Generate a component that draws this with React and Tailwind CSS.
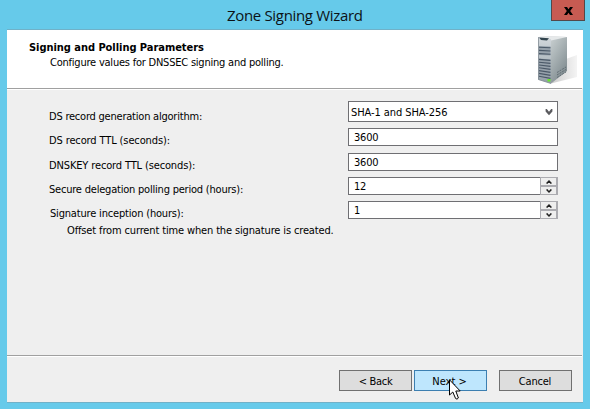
const TEXT = "font-['DejaVu_Sans_Condensed','DejaVu_Sans',sans-serif] text-[11px] leading-[13px] whitespace-nowrap text-black";

function Server() {
  return (
    <svg width="42" height="50" viewBox="3 0 42 50" className="block">
      <defs>
        <linearGradient id="side" x1="0" y1="0" x2="1" y2="1">
          <stop offset="0" stopColor="#e3e6e7" />
          <stop offset="0.45" stopColor="#b0b9bb" />
          <stop offset="1" stopColor="#727e83" />
        </linearGradient>
        <linearGradient id="front" x1="0" y1="0" x2="0" y2="1">
          <stop offset="0" stopColor="#d3d9dd" />
          <stop offset="1" stopColor="#929ea6" />
        </linearGradient>
        <linearGradient id="shade" x1="0" y1="0" x2="1" y2="0">
          <stop offset="0" stopColor="#cccccc" />
          <stop offset="1" stopColor="#f4f4f4" />
        </linearGradient>
      </defs>
      <path d="M31 23 L42 19 V41 L16 47.5 Z" fill="url(#shade)" />
      <path d="M3 1 L13 0.3 L32 1 V35 L16 47.5 L15 5 Z" fill="url(#side)" />
      <path d="M3 1 L13 0.3 L32 1 L16 4.5 Z" fill="#e6e9ea" />
      <path d="M3 1 L16 3 V47.5 L3 43.5 Z" fill="url(#front)" />
      <path d="M4 1.6 L14 2.2 L12 4.4 L6 4 Z" fill="#33454f" />
      <path d="M4 10 L15.5 10.5 V19.5 L4 19 Z M4 22.5 L15.5 23.5 V43.5 L4 40.5 Z" fill="#96a1ab" />
      <path
        d="M4 11.2 L15.5 11.8 M4 14.4 L15.5 15 M4 17.6 L15.5 18.2 M4 23.4 L15.5 24.4 M4 26.2 L15.5 27.4 M4 29 L15.5 30.4 M4 31.8 L15.5 33.4 M4 34.6 L15.5 36.4 M4 37.4 L15.5 39.4 M4 40.2 L15.5 42.4"
        stroke="#4b5968"
        strokeWidth="1.1"
      />
      <path d="M3.4 1 V43.5 L16 47.5" fill="none" stroke="#7d8890" strokeWidth="0.8" />
      <path d="M22 36.5 L31 31 M22 39 L31 33.5 M22 41.5 L31 36" stroke="#5b686e" strokeWidth="0.9" strokeDasharray="2 1" />
      <rect x="12.5" y="43" width="3" height="2.5" fill="#67e82a" />
    </svg>
  );
}

function Chevron({ up }) {
  return (
    <svg width="6" height="4" viewBox="0 0 6 4" className="block">
      <path d={up ? 'M0.6 3.6 L3 1.1 L5.4 3.6' : 'M0.6 0.4 L3 2.9 L5.4 0.4'} fill="none" stroke="#222" strokeWidth="1.5" />
    </svg>
  );
}

function Label({ children, className }) {
  return <div className={`${TEXT} w-[299px] shrink-0 ${className}`}>{children}</div>;
}

function Input({ children }) {
  return (
    <div className="h-[18px] w-[210px] border border-[#6f6f73] bg-white pt-[2px] pl-[5px]">
      <div className={`${TEXT} tracking-[-0.2px]`}>{children}</div>
    </div>
  );
}

function Spinner({ children }) {
  return (
    <div className="flex h-[18px] w-[210px]">
      <div className="h-[18px] w-[192px] border border-r-0 border-[#6f6f73] bg-white pt-[2px] pl-[5px]">
        <div className={`${TEXT} tracking-[-0.3px]`}>{children}</div>
      </div>
      <div className="flex h-[18px] w-[18px] flex-col gap-[2px] border border-r-2 border-[#ababb0] bg-[#ababb0]">
        <div className="flex h-[7px] items-center justify-center bg-[#eeeeee]"><Chevron up /></div>
        <div className="flex h-[7px] items-center justify-center bg-[#eeeeee]"><Chevron /></div>
      </div>
    </div>
  );
}

function Button({ children, className }) {
  return <div className={`${TEXT} h-[21px] w-[73px] border pt-[4px] text-center ${className}`}>{children}</div>;
}

export default function App() {
  return (
    <div className="relative h-[409px] w-[590px] overflow-hidden bg-[#66caea]">
      <div className="flex h-[29px] items-start">
        <div className="w-[551px] pt-[5px] pl-[227px] font-['Open_Sans','Noto_Sans',sans-serif] text-[15px] leading-[20px] tracking-[-0.33px] whitespace-nowrap text-[#0c1216]">Zone Signing Wizard</div>
        <div className="flex h-[21px] w-[34px] items-center justify-center border border-t-0 border-[#53484a] bg-[#c75b52]">
          <svg width="9" height="8" viewBox="0 0 9 8" className="mt-px block">
            <path d="M0 0 H3 L4.5 2.2 L6 0 H9 L6.2 4 L9 8 H6 L4.5 5.8 L3 8 H0 L2.8 4 Z" fill="#000" />
          </svg>
        </div>
      </div>

      <div className="ml-[7px] flex h-[374px] w-[576px] flex-col border-t border-b border-[#70b1c8] bg-[#efefef]">
        <div className="flex h-[58px] justify-between bg-white pr-[3px]">
          <div className="pt-[11px] pl-[22px]">
            <div className={`${TEXT} font-bold tracking-[-0.04px]`}>Signing and Polling Parameters</div>
            <div className={`${TEXT} mt-[2px] pl-[21px] tracking-[-0.22px]`}>Configure values for DNSSEC signing and polling.</div>
          </div>
          <div className="pt-[6px]"><Server /></div>
        </div>
        <div className="mr-px h-[2px] border-t border-b border-t-[#a0a0a0] border-b-white" />

        <div className="h-[265px] pt-[11px] pl-[42px]">
          <div className="flex h-[27px]">
            <Label className="pt-[9px] tracking-[-0.22px]">DS record generation algorithm:</Label>
            <div className="flex h-[21px] w-[210px] justify-between border border-[#6f6f73] bg-white pt-[4px] pr-[4px] pl-[2px]">
              <div className={`${TEXT} tracking-[-0.08px]`}>SHA-1 and SHA-256</div>
              <svg width="8" height="7" viewBox="0 0 8 7" className="mt-[3px] block">
                <path d="M0.6 0 H1.8 L4 2.8 L6.2 0 H7.4 V2.4 L4 6.2 L0.6 2.4 Z" fill="#5b5b5f" />
              </svg>
            </div>
          </div>
          <div className="flex h-[25px]">
            <Label className="pt-[6px] tracking-[-0.12px]">DS record TTL (seconds):</Label>
            <Input>3600</Input>
          </div>
          <div className="flex h-[24px]">
            <Label className="pt-[6px] tracking-[-0.14px]">DNSKEY record TTL (seconds):</Label>
            <Input>3600</Input>
          </div>
          <div className="flex h-[24px]">
            <Label className="pt-[6px] tracking-[-0.21px]">Secure delegation polling period (hours):</Label>
            <Spinner>12</Spinner>
          </div>
          <div className="flex h-[23px]">
            <Label className="pt-[6px] pl-[1px] tracking-[-0.18px]">Signature inception (hours):</Label>
            <Spinner>1</Spinner>
          </div>
          <div className={`${TEXT} pl-[18px] tracking-[-0.14px]`}>Offset from current time when the signature is created.</div>
        </div>

        <div className="mr-px h-[2px] border-t border-b border-t-[#a0a0a0] border-b-white" />
        <div className="flex pt-[13px] pl-[332px]">
          <Button className="border-[#707070] bg-[#dddddd] tracking-[-0.3px]">&lt; Back</Button>
          <Button className="ml-[2px] border-[#3c7fb1] bg-[#bee6fd] pr-[2px]">Next &gt;</Button>
          <Button className="ml-[12px] border-[#707070] bg-[#dddddd] pr-[1px] tracking-[-0.2px]">Cancel</Button>
        </div>
      </div>

      <svg width="13" height="22" viewBox="0 0 13 22" className="absolute top-[379px] left-[449px]">
        <path d="M0.5 0.8 V16 L3.8 13 L6.6 19.5 Q8 21 9.4 19 L6.8 12 H11.2 Z" fill="#fff" stroke="#000" strokeWidth="1" />
      </svg>
    </div>
  );
}
